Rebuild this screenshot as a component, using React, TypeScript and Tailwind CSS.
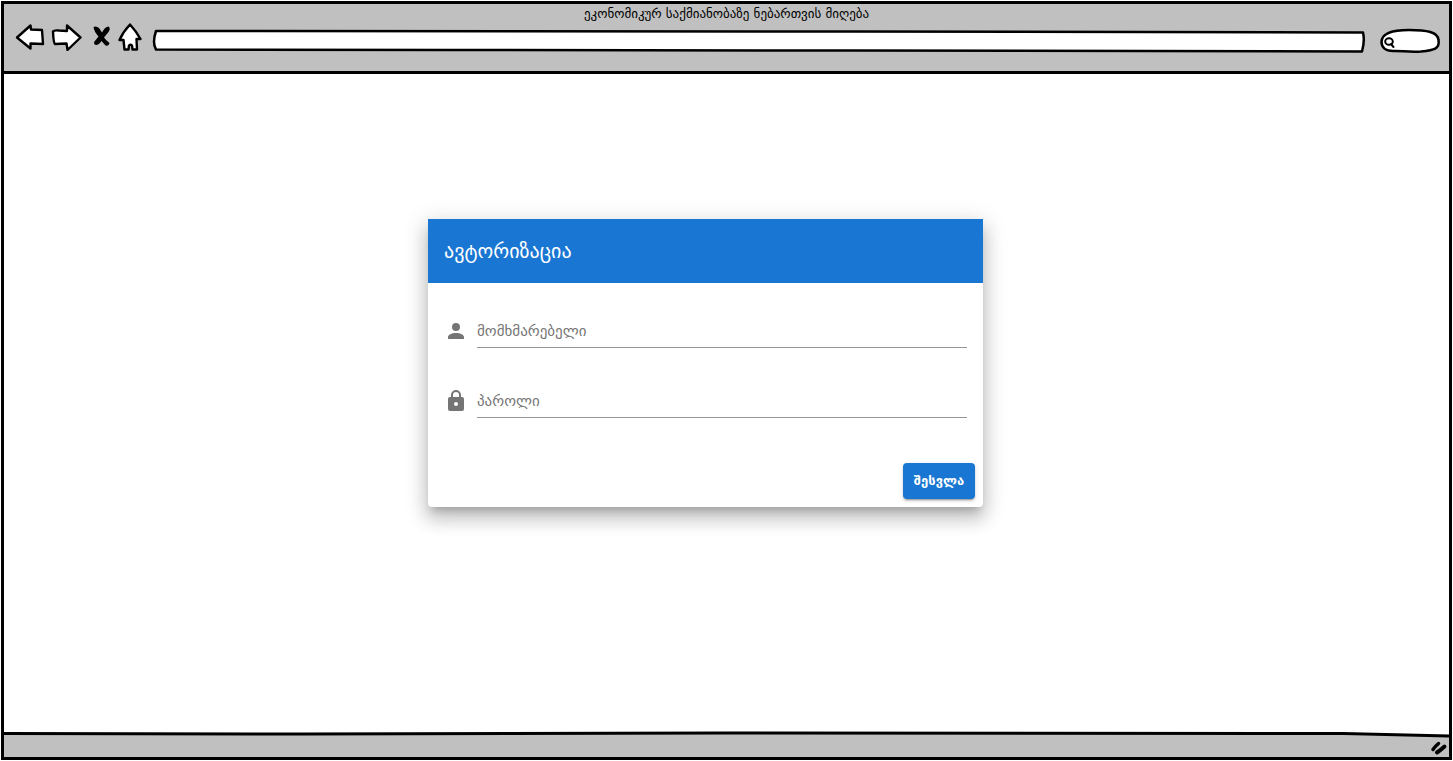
import { useState } from "react";

const BackIcon = () => (
  <svg className="h-7 w-8" viewBox="0 0 32 28" fill="white" stroke="black" strokeWidth="2.4" strokeLinejoin="round" aria-hidden="true">
    <path d="M3 14.500L16.500 2.500L17 6.500L28 7L29 21L16.500 20.500V25.500Z" />
  </svg>
);

const ForwardIcon = () => (
  <svg className="h-7 w-8" viewBox="0 0 32 28" fill="white" stroke="black" strokeWidth="2.4" strokeLinejoin="round" aria-hidden="true">
    <path d="M3 8.500Q4 7 9 7.500L17 8V2.500L30.500 14.500L17.500 27L16.500 20.500L5 21Q3.500 20 3 8.500Z" />
  </svg>
);

const StopIcon = () => (
  <svg className="h-7 w-5" viewBox="0 0 20 28" aria-hidden="true">
    <path d="M1.500 4Q4 2.500 7 5L10 9.500Q13 3.500 16.500 3.500Q19 5 16.500 9L12 14.500Q14 17.500 17.500 20Q17 23.500 13.500 22.500L9.500 18Q7 22 4 22Q1 21 2.500 18.500L6.500 13.500Q2 8.500 1.500 4Z" />
  </svg>
);

const HomeIcon = () => (
  <svg className="h-7 w-7" viewBox="0 0 28 28" fill="white" stroke="black" strokeWidth="2.400" strokeLinejoin="round" aria-hidden="true">
    <path d="M14 1.500Q20 8 24.500 16H20.500L21 26.500H16.500L16 22.500Q14.500 21 13 22.500L12.500 26.500H8.500L7.500 17H3.500Q7 9 14 1.500Z" />
  </svg>
);

const PersonIcon = () => (
  <svg className="size-6 shrink-0 fill-[#757575]" viewBox="0 0 24 24" aria-hidden="true">
    <path d="M12 4a4 4 0 0 1 4 4 4 4 0 0 1-4 4 4 4 0 0 1-4-4 4 4 0 0 1 4-4m0 10c4.420 0 8 1.790 8 4v2H4v-2c0-2.210 3.580-4 8-4z" />
  </svg>
);

const LockIcon = () => (
  <svg className="size-6 shrink-0 fill-[#757575]" viewBox="0 0 24 24" aria-hidden="true">
    <path d="M12 17a2 2 0 0 0 2-2 2 2 0 0 0-2-2 2 2 0 0 0-2 2 2 2 0 0 0 2 2m6-9a2 2 0 0 1 2 2v10a2 2 0 0 1-2 2H6a2 2 0 0 1-2-2V10a2 2 0 0 1 2-2h1V6a5 5 0 0 1 5-5 5 5 0 0 1 5 5v2h1m-6-5a3 3 0 0 0-3 3v2h6V6a3 3 0 0 0-3-3z" />
  </svg>
);

const BrowserBar = () => {
  return (
    <header className="border-b-[3px] border-black bg-[#c0c0c0] pb-[18px]">
      <h1 className="pt-0.5 text-center text-[13px] leading-[15px]">
        ეკონომიკურ საქმიანობაზე ნებართვის მიღება
      </h1>

      <div className="flex items-center pr-2 pl-2.5">
        <button aria-label="Back">
          <BackIcon />
        </button>
        <button aria-label="Forward" className="ml-1">
          <ForwardIcon />
        </button>
        <button aria-label="Stop" className="ml-2.5">
          <StopIcon />
        </button>
        <button aria-label="Home" className="ml-1">
          <HomeIcon />
        </button>

        <div className="relative mt-2 ml-2 h-6 flex-1">
          <svg className="absolute inset-0 size-full overflow-visible" viewBox="0 0 1214 24" preserveAspectRatio="none" fill="white" stroke="black" strokeWidth="2.500" strokeLinejoin="round" aria-hidden="true">
            <path vectorEffect="non-scaling-stroke" d="M4 2L700 2.500L1212 3.500Q1214 12 1211 22.500L700 21.500L300 21L4 20.500Q0 14 4 2Z" />
          </svg>
          <input aria-label="Address" className="relative size-full bg-transparent px-3 text-xs outline-none" />
        </div>

        <div className="relative mt-2 ml-3.5 h-6 w-[62px]">
          <svg className="absolute inset-0 size-full overflow-visible" viewBox="0 0 62 24" fill="white" stroke="black" strokeWidth="2.500" aria-hidden="true">
            <path d="M2.500 13C2.500 5 11 1 30 1C48 1 59 3 59.500 11C61 20 55 21 42 22.500C30 23.500 22 21.500 14 22C6 22 2.500 18 2.500 13Z" />
            <ellipse cx="10" cy="12.500" rx="3.800" ry="3.300" strokeWidth="2" />
            <path fill="none" strokeLinecap="round" d="M12 15L14.500 18" strokeWidth="2" />
          </svg>
          <input aria-label="Search" className="relative size-full bg-transparent pr-2 pl-5 text-xs outline-none" />
        </div>
      </div>
    </header>
  );
};

const StatusBar = () => {
  return (
    <footer className="relative flex h-[25px] items-center justify-end bg-[#c0c0c0]">
      {/* sketchy top edge */}
      <svg className="absolute inset-x-0 top-0 h-1.5 w-full overflow-visible" viewBox="0 0 1446 6" preserveAspectRatio="none" aria-hidden="true">
        <path d="M0 0H1446V4L1200 1.500H0Z" fill="white" />
        <path d="M0 1.500L300 2L720 1L1340 1.500L1446 4" fill="none" stroke="black" strokeWidth="3" />
      </svg>
      <svg className="mt-1.5 h-4 w-5" viewBox="0 0 20 16" fill="none" stroke="black" strokeLinecap="round" aria-hidden="true">
        <path d="M4 9.500Q6 6.500 9.500 3.500" strokeWidth="3.500" />
        <path d="M8 12.500Q11 10.500 15.500 6.500" strokeWidth="4" />
      </svg>
    </footer>
  );
};

const App = () => {
  const [form, setForm] = useState({ userName: "", password: "" });

  const handleChange = (e: React.ChangeEvent<HTMLInputElement>) => {
    setForm({
      ...form,
      [e.target.name]: e.target.value,
    });
  };

  const handleSubmit = (e: React.FormEvent) => {
    e.preventDefault();
  };

  return (
    <div className="flex min-h-screen bg-white p-px font-['DejaVu_Sans',sans-serif] text-black">
      <div className="flex flex-1 flex-col border-[3px] border-black">
        <BrowserBar />

        <main className="flex flex-1 items-start justify-center bg-white pt-[145px] pr-[42px] pb-10">
          <form
            onSubmit={handleSubmit}
            className="w-full max-w-[555px] rounded-b bg-white shadow-[0_7px_8px_-4px_rgba(0,0,0,0.2),0_12px_17px_2px_rgba(0,0,0,0.14),0_5px_22px_4px_rgba(0,0,0,0.12)]"
          >
            <div className="flex h-16 items-center bg-[#1976d2] px-4">
              <h2 className="text-xl text-white">ავტორიზაცია</h2>
            </div>

            <div className="px-4 pt-8 pb-[37px]">
              <div className="flex items-start gap-[9px]">
                <label htmlFor="userName" aria-label="მომხმარებელი" className="mt-1">
                  <PersonIcon />
                </label>
                <input
                  id="userName"
                  name="userName"
                  value={form.userName}
                  onChange={handleChange}
                  placeholder="მომხმარებელი"
                  className="h-[33px] w-full border-b border-[#949494] text-[15px] outline-none placeholder:text-[#757575]"
                />
              </div>

              <div className="mt-[37px] flex items-start gap-[9px]">
                <label htmlFor="password" aria-label="პაროლი" className="mt-1">
                  <LockIcon />
                </label>
                <input
                  id="password"
                  type="password"
                  name="password"
                  value={form.password}
                  onChange={handleChange}
                  placeholder="პაროლი"
                  className="h-[33px] w-full border-b border-[#949494] text-[15px] outline-none placeholder:text-[#757575]"
                />
              </div>
            </div>

            <div className="flex justify-end p-2">
              <button className="h-9 min-w-[72px] rounded bg-[#1976d2] px-2 text-[13px] font-bold text-white shadow-[0_3px_1px_-2px_rgba(0,0,0,0.2),0_2px_2px_0_rgba(0,0,0,0.14),0_1px_5px_0_rgba(0,0,0,0.12)]">
                შესვლა
              </button>
            </div>
          </form>
        </main>

        <StatusBar />
      </div>
    </div>
  );
};

export default App;
